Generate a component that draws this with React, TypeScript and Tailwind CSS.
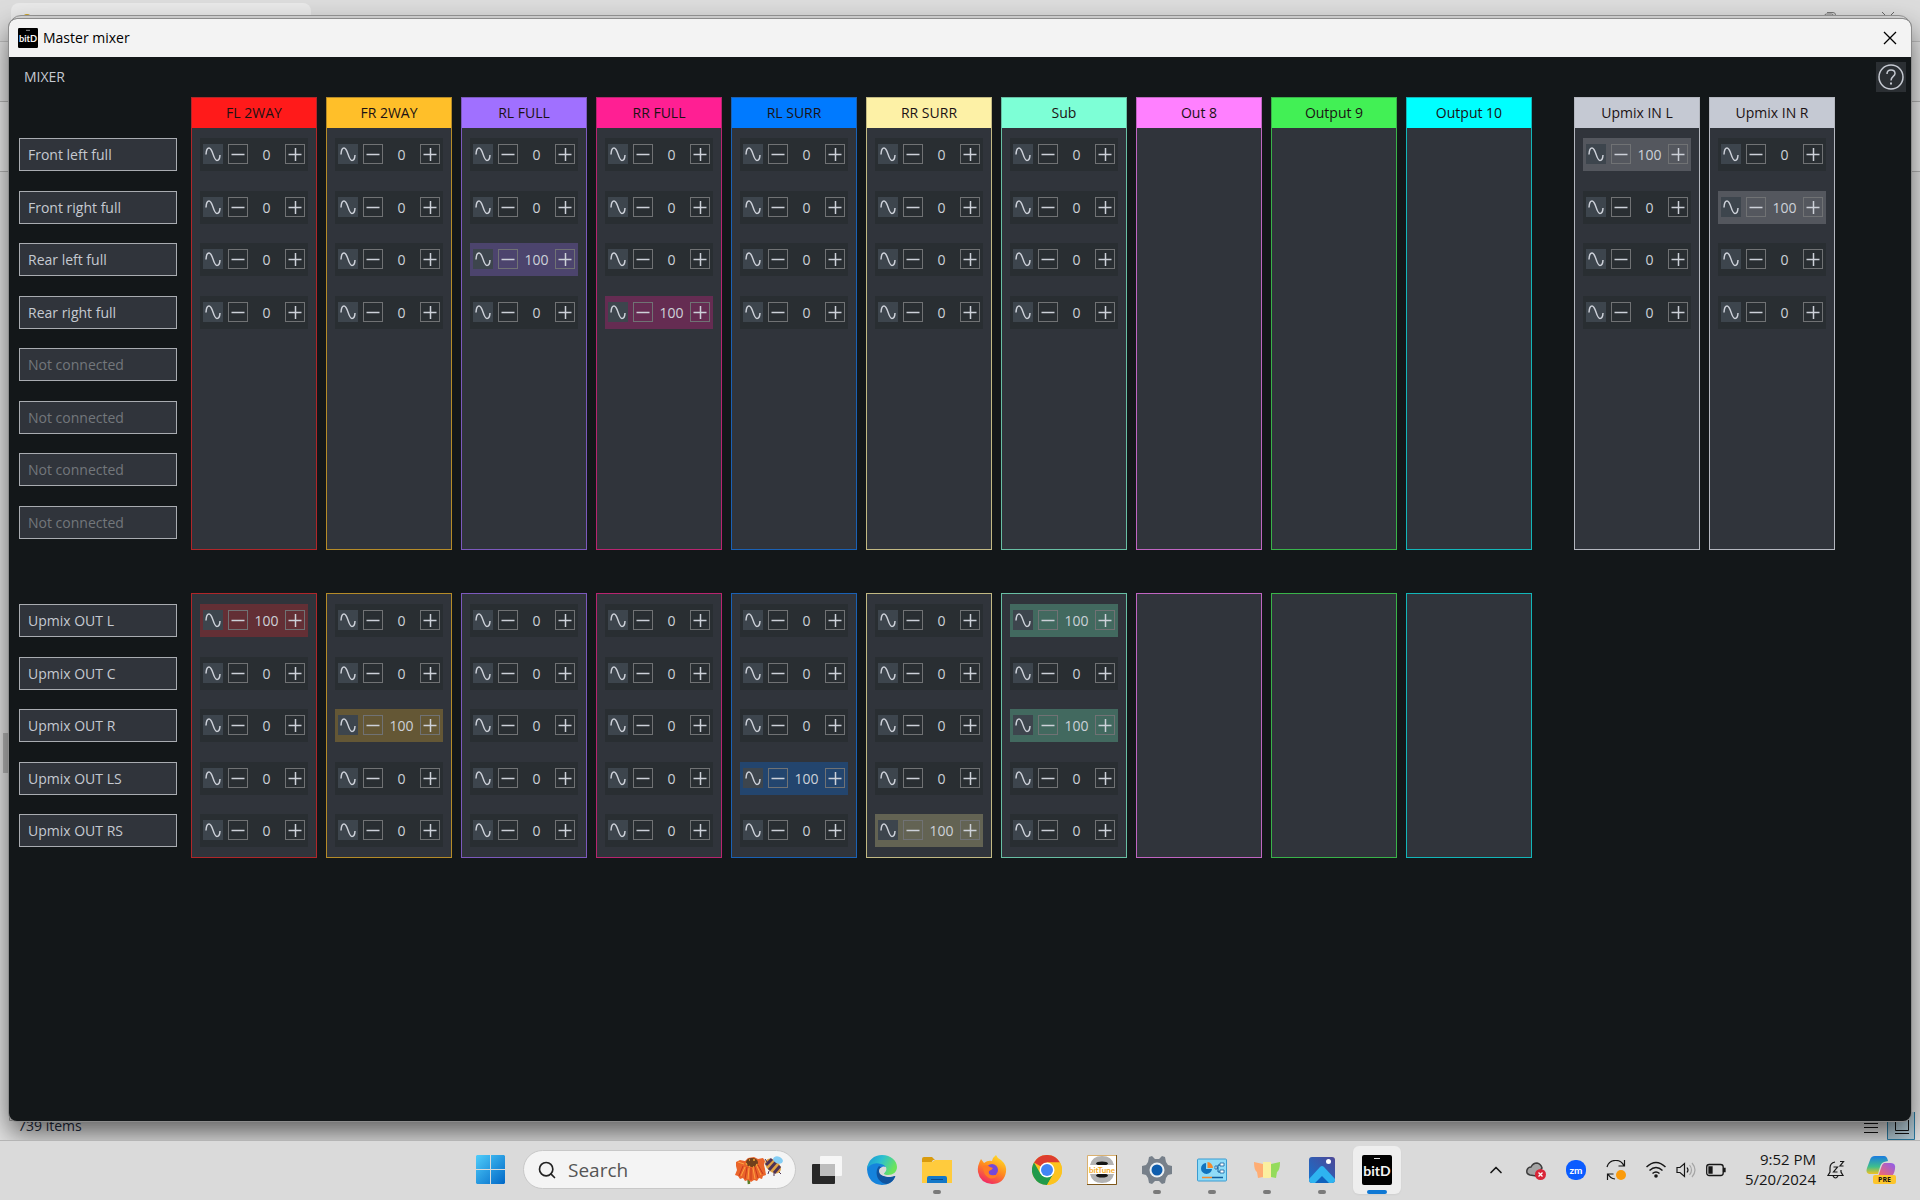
import React from 'react';
import { Search, ChevronUp } from 'lucide-react';

type Channel = {
  name: string;
  header: string;
  border: string;
  active: string;
  used: boolean;
};

const outputs: Channel[] = [
  { name: 'FL 2WAY', header: 'bg-[#ff1a1a]', border: 'border-[#b02629]', active: 'bg-[#632f35]', used: true },
  { name: 'FR 2WAY', header: 'bg-[#ffbf29]', border: 'border-[#b58b28]', active: 'bg-[#645735]', used: true },
  { name: 'RL FULL', header: 'bg-[#a070ff]', border: 'border-[#7c59bd]', active: 'bg-[#4c446d]', used: true },
  { name: 'RR FULL', header: 'bg-[#ff1f93]', border: 'border-[#b8246f]', active: 'bg-[#652c52]', used: true },
  { name: 'RL SURR', header: 'bg-[#007aff]', border: 'border-[#1a61b5]', active: 'bg-[#23456e]', used: true },
  { name: 'RR SURR', header: 'bg-[#fdf1a6]', border: 'border-[#c2b983]', active: 'bg-[#636353]', used: true },
  { name: 'Sub', header: 'bg-[#7dffd6]', border: 'border-[#68bfa4]', active: 'bg-[#42695f]', used: true },
  { name: 'Out 8', header: 'bg-[#ff80ff]', border: 'border-[#c065c2]', active: 'bg-[#654565]', used: false },
  { name: 'Output 9', header: 'bg-[#42f055]', border: 'border-[#39b349]', active: 'bg-[#2f6338]', used: false },
  { name: 'Output 10', header: 'bg-[#00ffff]', border: 'border-[#12b6b9]', active: 'bg-[#1f6467]', used: false },
];

const upmixInputs: Channel[] = [
  { name: 'Upmix IN L', header: 'bg-[#c5c9d3]', border: 'border-[#b4b7bf]', active: 'bg-[#54575e]', used: true },
  { name: 'Upmix IN R', header: 'bg-[#c5c9d3]', border: 'border-[#b4b7bf]', active: 'bg-[#54575e]', used: true },
];

const inputs = ['Front left full', 'Front right full', 'Rear left full', 'Rear right full', '', '', '', ''];
const upmixOutputs = ['Upmix OUT L', 'Upmix OUT C', 'Upmix OUT R', 'Upmix OUT LS', 'Upmix OUT RS'];

// "row > column" pairs that are routed at full level
const routed = new Set([
  'Rear left full > RL FULL',
  'Rear right full > RR FULL',
  'Front left full > Upmix IN L',
  'Front right full > Upmix IN R',
  'Upmix OUT L > FL 2WAY',
  'Upmix OUT R > FR 2WAY',
  'Upmix OUT LS > RL SURR',
  'Upmix OUT RS > RR SURR',
  'Upmix OUT L > Sub',
  'Upmix OUT R > Sub',
]);

const gridClass =
  'grid grid-cols-[163px_repeat(10,minmax(0,1fr))_24px_repeat(2,minmax(0,1fr))] gap-x-[9px] pl-2.5 pr-[76px]';

function Cell({ row, channel }: { row: string; channel: Channel }) {
  const id = `${row} > ${channel.name}`;
  const on = routed.has(id);
  return (
    <div className={`flex h-[33px] shrink-0 items-start px-[3px] pt-1.5 text-[#cdd1d9] ${on ? channel.active : 'bg-[#292e32]'}`}>
      <button aria-label={`Phase ${id}`} className="h-5 w-5 shrink-0 bg-[#3d454d]">
        <svg viewBox="0 0 20 20" className="h-5 w-5" fill="none" stroke="currentColor" strokeWidth="1.5">
          <path d="M3 10.500C3.200 6.500 4.200 4 6 4c4 0 4.200 12.500 8 12.500 1.800 0 2.800-2 3-5.500" />
        </svg>
      </button>
      <button aria-label={`Decrease ${id}`} className="ml-[5px] h-5 w-5 shrink-0 border border-[#707274]">
        <svg viewBox="0 0 18 18" className="h-[18px] w-[18px]" stroke="currentColor" strokeWidth="1.5">
          <path d="M2.500 9.500h13" />
        </svg>
      </button>
      <input
        aria-label={`Level ${id}`}
        defaultValue={on ? '100' : '0'}
        className="h-5 min-w-0 flex-1 bg-transparent pt-0.5 text-center text-sm leading-5 outline-none"
      />
      <button aria-label={`Increase ${id}`} className="h-5 w-5 shrink-0 border border-[#707274]">
        <svg viewBox="0 0 18 18" className="h-[18px] w-[18px]" stroke="currentColor" strokeWidth="1.5">
          <path d="M2.500 9.500h13M9.500 3v13" />
        </svg>
      </button>
    </div>
  );
}

function Column({ channel, rows, header }: { channel: Channel; rows: string[]; header: boolean }) {
  return (
    <div className={`flex flex-col border bg-[#30343b] ${channel.border}`}>
      {header && (
        <div className={`flex h-[30px] items-center justify-center text-sm text-[#1b1214] ${channel.header}`}>{channel.name}</div>
      )}
      <div className={`flex flex-col justify-between px-2 py-2.5 ${header ? 'h-[421px]' : 'h-[263px]'}`}>
        {rows.map((row, i) =>
          row && channel.used ? <Cell key={i} row={row} channel={channel} /> : <div key={i} className="h-[33px]" />
        )}
      </div>
    </div>
  );
}

function RowNames({ rows, className }: { rows: string[]; className: string }) {
  return (
    <div className={`mr-[5px] flex flex-col justify-between ${className}`}>
      {rows.map((row, i) => (
        <div
          key={i}
          className={`flex h-[33px] items-center border border-[#a9acb1] bg-[#30343b] px-2 pt-px text-sm ${row ? 'text-[#c5c9d1]' : 'text-[#73777b]'}`}
        >
          {row || 'Not connected'}
        </div>
      ))}
    </div>
  );
}

function BitLogo({ className }: { className: string }) {
  return (
    <svg viewBox="0 0 30 30" className={className}>
      <rect width="30" height="30" rx="2" fill="#000" />
      <path d="M12 3.500h6" stroke="#ddd" strokeWidth="1" />
      <text x="15" y="20.500" textAnchor="middle" fontFamily="Lato, sans-serif" fontWeight="700" fontSize="14" fill="#f4f4f4">
        bitD
      </text>
    </svg>
  );
}

function MixerWindow() {
  return (
    <main className="relative flex flex-1 flex-col overflow-hidden rounded-lg bg-[#131719] shadow-[0_0_0_1px_#8c8c8c,0_12px_28px_rgba(0,0,0,0.6)]">
      <header className="flex h-[38px] items-center bg-[#f3f3f3] pl-[9px] pr-[14px] text-black">
        <BitLogo className="h-5 w-5" />
        <h1 className="ml-[5px] text-sm">Master mixer</h1>
        <button aria-label="Close" className="ml-auto">
          <svg viewBox="0 0 14 14" className="h-3.5 w-3.5" stroke="currentColor" strokeWidth="1.3">
            <path d="M1 1l12 12M13 1L1 13" />
          </svg>
        </button>
      </header>

      <div className="flex h-10 items-center justify-between pl-[15px] pr-[5px] text-[#c5c9d1]">
        <h2 className="text-sm">MIXER</h2>
        <button aria-label="Help" className="h-[30px] w-[30px] bg-[#2b2f33]">
          <svg viewBox="0 0 30 30" fill="none" stroke="currentColor" strokeWidth="1.5">
            <circle cx="15" cy="15" r="12" />
            <path d="M11 12c0-5.500 8-5 8-.5 0 3-4 3-4 7" />
            <path d="M15 20.500v2" strokeWidth="2" />
          </svg>
        </button>
      </div>

      <section className={gridClass}>
        <RowNames rows={inputs} className="mt-[41px] h-[401px]" />
        {outputs.map(c => <Column key={c.name} channel={c} rows={inputs} header />)}
        <div />
        {upmixInputs.map(c => <Column key={c.name} channel={c} rows={inputs} header />)}
      </section>

      <section className={`mt-[43px] ${gridClass}`}>
        <RowNames rows={upmixOutputs} className="mt-[11px] h-[243px]" />
        {outputs.map(c => <Column key={c.name} channel={c} rows={upmixOutputs} header={false} />)}
      </section>
    </main>
  );
}

// File explorer that stays open behind the mixer
function Backdrop() {
  return (
    <div className="absolute inset-0 overflow-hidden bg-[#e4e4e4]">
      <div className="h-[41px] bg-[#dcdcdc] pt-[3px]">
        <div className="ml-[11px] h-full w-[300px] rounded-t-lg bg-[#e9e9e9] pl-3 pt-[11px]">
          <div className="h-2 w-2 rounded-full bg-[#c9a227]" />
        </div>
      </div>
      <div className="h-[60px] border-t border-[#c0c0c0]" />
      <div className="h-[71px] border-y border-[#b4b4b4] bg-[#ebebeb]" />
      <svg viewBox="0 0 12 12" className="absolute right-[84px] top-3 h-3 w-3" fill="none" stroke="#777">
        <path d="M.5 11V4q0-2 2-2h5q2 0 2 2M3 .5h6q2.500 0 2.500 2.500v6" />
      </svg>
      <svg viewBox="0 0 12 12" className="absolute right-[26px] top-3 h-3 w-3" stroke="#666">
        <path d="M0 0l12 12M12 0L0 12" />
      </svg>
      <div className="absolute left-[3px] top-[733px] h-10 w-2.5 bg-[#b5b5b5]" />
      <div className="absolute inset-x-[9px] bottom-[19px] top-[15px] rounded-t-xl border border-[#9a9a9a] bg-[#dedede]" />
      <div className="absolute inset-x-0 bottom-0 flex h-7 items-end justify-end gap-1.5 pr-[5px]">
        <p className="mr-auto pb-1 pl-[18px] text-sm leading-5 text-[#1f2a3d]">739 items</p>
        <svg viewBox="0 0 20 28" className="h-7 w-5" stroke="#111">
          <path d="M3 11.500h14M3 15.500h14M3 20.500h14" />
        </svg>
        <svg viewBox="0 0 28 28" className="h-7 w-7" fill="none" stroke="#111">
          <path d="M.5 0v27.500h27V0" fill="#b4cbd6" stroke="#2a7da5" />
          <path d="M8.500 4v14.500h13V4M8 21.500h14" />
        </svg>
      </div>
    </div>
  );
}

function TaskButton({ name, running, children }: { name: string; running?: boolean; children: React.ReactNode }) {
  return (
    <button aria-label={name} className="relative flex h-12 w-12 items-center justify-center">
      {children}
      {running && <span className="absolute bottom-0 h-1 w-2 rounded-full bg-[#7a7a7a]" />}
    </button>
  );
}

function Taskbar() {
  return (
    <footer className="grid h-[60px] grid-cols-[minmax(0,466fr)_auto_minmax(0,519fr)] items-center border-t border-[#b4b4b4] bg-[#dadada] pb-0.5">
      <div />
      <div className="flex items-center gap-[7px]">
        <TaskButton name="Start">
          <svg viewBox="0 0 29 29" className="h-[29px] w-[29px]">
            <defs>
              <linearGradient id="win" x1="0" y1="0" x2="1" y2="1">
                <stop offset="0" stopColor="#4fcdfa" />
                <stop offset="1" stopColor="#0067c7" />
              </linearGradient>
            </defs>
            <path d="M1 0h13v14H0V1zM15 0h13l1 1v13H15zM0 15h14v14H1l-1-1zM15 15h14v13l-1 1H15z" fill="url(#win)" />
          </svg>
        </TaskButton>
        <label className="ml-0.5 flex h-[39px] w-[273px] items-center rounded-full border border-[#c8c8c8] bg-[#f4f4f4] pl-[13px] pr-3">
          <Search size={20} strokeWidth={2} className="shrink-0 text-[#222]" />
          <input placeholder="Search" aria-label="Search" className="ml-[11px] min-w-0 flex-1 bg-transparent text-[19px] leading-6 placeholder-[#555] outline-none" />
          <svg viewBox="0 0 48 30" className="h-[30px] w-12 shrink-0">
            <path d="M13 20l1 9" stroke="#5b7d24" strokeWidth="2.500" />
            <path d="M1 7l4-2 5 1 3-3 6-1 4 2 5-1 2 3-1 4 1 4 1 6-3 1-1 3-3-1-2 3-3-1-3 2-3-2-3 1-2-3-3 1-2-3-3-1 2-5-1-4z" fill="#ea642a" />
            <path d="M8 11L4 21M12 12l-2 12M16 13v12M20 12l3 11M23 10l5 9" stroke="#c93a1c" strokeWidth="1" />
            <path d="M3 7l6 2M10 12l-4 9M14 13l-1 11M18 13l2 11M22 11l4 9" stroke="#ffa340" strokeWidth="1" />
            <ellipse cx="17" cy="7.500" rx="6" ry="4.500" fill="#70401c" />
            <path d="M11 8l1 2M14 11l1 1M18 12h1M22 9l-1 2M14 5h1M18 5h2" stroke="#f0a531" strokeWidth="1.300" />
            <ellipse cx="38" cy="11" rx="9" ry="6" transform="rotate(40 38 11)" fill="#e0a345" />
            <path d="M31 10l6-6M34 15l7-8M39 18l6-7" stroke="#4c3257" strokeWidth="3" />
            <ellipse cx="43" cy="5" rx="5" ry="3.500" transform="rotate(20 43 5)" fill="#84cdf4" />
            <path d="M30 4l2 3M34 16l-1 3M39 18v3M44 17l2 2" stroke="#4c3257" />
          </svg>
        </label>
        <TaskButton name="Task view">
          <svg viewBox="0 0 30 30" className="h-[30px] w-[30px]">
            <rect x="0" y="9" width="23" height="20" rx="1" fill="#282828" />
            <rect x="8" y="1" width="22" height="20" rx="1" fill="#f6f6f6" />
            <rect x="8" y="9" width="15" height="12" fill="#bdbdbd" />
          </svg>
        </TaskButton>
        <TaskButton name="Edge">
          <svg viewBox="0 0 30 30" className="h-[30px] w-[30px]">
            <defs>
              <linearGradient id="edge" x1="0" y1="0" x2="1" y2=".4">
                <stop offset="0" stopColor="#1793d6" />
                <stop offset=".5" stopColor="#2cc0cf" />
                <stop offset="1" stopColor="#6be45b" />
              </linearGradient>
            </defs>
            <path d="M0 14Q1 6 9 6q8 0 10 6-5-2-6 4 1 8 10 7l5-1q-4 8-13 8Q1 29 0 14z" fill="#1583dc" />
            <path d="M0 14C1 5 7 0 15 0c9 0 15 6 15 12 0 5-4 8-9 8-4 0-5-1-3-3 3-3 1-7-4-8C8 7 3 9 0 14z" fill="url(#edge)" />
            <path d="M12 11c-5 6-2 17 8 18 4-1 7-4 8-7 1-1 0-1-1-1-4 2-13 1-14-4 0-2 1-3 2-4z" fill="#10549f" />
            <path d="M12 16c0-3 3-5 6-3 2 2 1 3 0 4-2 2-1 3 1 4-4 0-7-2-7-5z" fill="#dadada" />
          </svg>
        </TaskButton>
        <TaskButton name="File Explorer" running>
          <svg viewBox="0 0 30 30" className="h-[30px] w-[30px]">
            <path d="M0 4q0-2 2-2h8l3 3h-2l-2 3H0z" fill="#d99b0d" />
            <path d="M0 7h10l3-2h17v23H0z" fill="#ffcb3d" />
            <path d="M5 28v-5q0-2 2-2h16q2 0 2 2v5z" fill="#1478c8" />
            <path d="M9 24.500h12" stroke="#0a4a8b" />
          </svg>
        </TaskButton>
        <TaskButton name="Firefox">
          <svg viewBox="0 0 30 30" className="h-[30px] w-[30px]">
            <defs>
              <linearGradient id="fox" x1=".8" y1="0" x2=".3" y2="1">
                <stop offset="0" stopColor="#ffe226" />
                <stop offset=".5" stopColor="#ff8a1f" />
                <stop offset="1" stopColor="#f02468" />
              </linearGradient>
            </defs>
            <path d="M4 4l3 4q4-3 8-2 1-4 4-6 1 3 5 5 6 5 5 12-2 12-14 12Q3 28 1 17q-1-6 3-13z" fill="url(#fox)" />
            <circle cx="15" cy="15" r="6" fill="#7548d8" />
            <path d="M6 11q4-2 7 1l3 1q-1 2-4 3-1 3 2 4 4 1 7-1-3 6-9 4-6-3-6-12z" fill="#ff7b25" />
          </svg>
        </TaskButton>
        <TaskButton name="Chrome">
          <svg viewBox="0 0 30 30" className="h-[30px] w-[30px]">
            <circle cx="15" cy="15" r="15" fill="#fcc31e" />
            <path d="M15 15L2 7.500A15 15 0 0 1 28 7.500H15z" fill="#dd3c2f" />
            <path d="M2 7.500A15 15 0 0 0 15 30l6.500-11.300L15 15 8.500 18.700z" fill="#219a4b" />
            <path d="M15 7.500h13A15 15 0 0 1 15 30l6.500-11.300z" fill="#fcc31e" />
            <circle cx="15" cy="15" r="7.500" fill="#fff" />
            <circle cx="15" cy="15" r="6" fill="#4285f4" />
          </svg>
        </TaskButton>
        <TaskButton name="bitTune">
          <svg viewBox="0 0 30 30" className="h-[30px] w-[30px]">
            <path d="M.5 .5h29v29H.5z" fill="#fff" stroke="#d9b070" />
            <path d="M29.500 0v29.500H0" fill="none" stroke="#7d571b" />
            <path d="M3 10Q5 1 15 1t12 9zM3 19q2 9 12 9t12-9z" fill="#b3b3b3" />
            <ellipse cx="15" cy="8.500" rx="6" ry="2" fill="#151515" />
            <ellipse cx="15" cy="20.500" rx="6" ry="2" fill="#151515" />
            <rect x="1" y="10" width="28" height="9" fill="#fff" />
            <text x="15" y="17.500" textAnchor="middle" fontSize="8" fontWeight="700" fontFamily="Lato, sans-serif" fill="#f4ac2a">bitTune</text>
          </svg>
        </TaskButton>
        <TaskButton name="Settings" running>
          <svg viewBox="0 0 30 30" className="h-[30px] w-[30px]">
            <path d="M7 2l3-1 3 3h4l3-3 3 1 1 5 2 3 4 1v8l-4 1-2 3-1 5-3 1-3-3h-4l-3 3-3-1-1-5-2-3-4-1v-8l4-1 2-3z" fill="#77808a" />
            <circle cx="15" cy="15" r="7.500" fill="#edf1f4" />
            <circle cx="15" cy="15" r="5.500" fill="#0e5dad" />
          </svg>
        </TaskButton>
        <TaskButton name="Control Panel" running>
          <svg viewBox="0 0 30 30" className="h-[30px] w-[30px]">
            <rect x=".5" y="4" width="29" height="22" rx="1" fill="#8fdcf8" stroke="#3a9bd0" />
            <path d="M9 8a5.500 5.500 0 1 0 6 6H9z" fill="#1173bd" />
            <path d="M10.500 7a6 6 0 0 1 5.500 6h-5.500z" fill="#f58b2c" />
            <path d="M18 13h3v-3h3M21 13v4h3" fill="none" stroke="#135e9c" />
            <path d="M23 8h4v3h-4zM23 15h4v3h-4zM18 11h2v3h-2z" fill="#fff" stroke="#135e9c" strokeWidth=".8" />
            <path d="M5 22.500h10" stroke="#f58b2c" strokeWidth="1.500" />
            <path d="M15 22.500h11" stroke="#135e9c" strokeWidth="1.500" />
          </svg>
        </TaskButton>
        <TaskButton name="Panels" running>
          <svg viewBox="0 0 30 30" className="h-[30px] w-[30px]">
            <path d="M2 7l9 2v13l-5 1-1-6q-3-2-3-10z" fill="#ffad73" />
            <path d="M28 7l-9 2v13l5 1 1-6q3-2 3-10z" fill="#94db5b" />
            <path d="M11 7h8v16h-8z" fill="#fbefa0" />
          </svg>
        </TaskButton>
        <TaskButton name="Photos" running>
          <svg viewBox="0 0 30 30" className="h-[30px] w-[30px]">
            <defs>
              <linearGradient id="photo" x1="0" y1="1" x2="1" y2="0">
                <stop offset="0" stopColor="#1373cf" />
                <stop offset="1" stopColor="#4e4796" />
              </linearGradient>
            </defs>
            <rect x="2" y="2" width="26" height="26" rx="3" fill="url(#photo)" />
            <path d="M2 24L13 12q2-2 4 0l11 12v2q-1 2-3 2H5q-3 0-3-4z" fill="#2eb4f0" />
            <path d="M8 28l7-7 7 7z" fill="#1062bd" />
            <circle cx="21.500" cy="6.500" r="2.500" fill="#fff" />
          </svg>
        </TaskButton>
        <button aria-label="bitD" className="relative flex h-12 w-12 items-center justify-center rounded-md bg-[#eeeeee] shadow-xs">
          <BitLogo className="h-[30px] w-[30px]" />
          <span className="absolute bottom-0 h-1 w-5 rounded-full bg-[#0f78d4]" />
        </button>
      </div>

      <div className="flex items-center justify-end pr-6 text-[#161616]">
        <button aria-label="Show hidden icons" className="mr-5">
          <ChevronUp size={20} strokeWidth={2} />
        </button>
        <svg viewBox="0 0 20 20" className="mr-5 h-5 w-5">
          <path d="M4 15q-4-1-3-5 1-3 4-3 2-4 6-4 4 1 5 5l-6 8z" fill="#a5a5a5" stroke="#3d3d3d" strokeWidth="1.500" />
          <circle cx="14.500" cy="14.500" r="5.500" fill="#d92638" />
          <path d="M12.500 12.500l4 4M16.500 12.500l-4 4" stroke="#fff" strokeWidth="1.300" />
        </svg>
        <svg viewBox="0 0 20 20" className="mr-5 h-5 w-5">
          <rect width="20" height="20" rx="9" fill="#0b5cff" />
          <text x="10" y="13.500" textAnchor="middle" fontSize="10" fontWeight="700" fontFamily="Lato, sans-serif" fill="#fff">zm</text>
        </svg>
        <svg viewBox="0 0 20 20" className="mr-5 h-5 w-5" fill="none" stroke="#161616" strokeWidth="1.200">
          <path d="M1 7a9 9 0 0 1 17-1M18.500 0v6h-6M9 19a9 9 0 0 1-7-5M1.500 20v-6h6" />
          <circle cx="15" cy="15" r="5" fill="#fa9b0c" stroke="none" />
        </svg>
        <svg viewBox="0 0 20 20" className="mr-2.5 h-5 w-5" fill="none" stroke="#161616" strokeWidth="1.500">
          <path d="M.5 7q9.500-9 19 0M3.500 10.500q6.500-6 13 0M6.500 13.500q3.500-3 7 0" />
          <circle cx="10" cy="16" r="1.800" fill="#161616" stroke="none" />
        </svg>
        <svg viewBox="0 0 20 20" className="mr-2.5 h-5 w-5" fill="none" stroke="#161616" strokeWidth="1.200">
          <path d="M1 7.500h3l4.500-4v13l-4.500-4H1z" />
          <path d="M11 7.500q2 2.500 0 5" />
          <path d="M13.500 5q4 5 0 10M16 3q6 7 0 14" stroke="#a5a5a5" />
        </svg>
        <svg viewBox="0 0 20 20" className="mr-2.5 h-5 w-5" fill="none" stroke="#161616" strokeWidth="1.300">
          <rect x=".7" y="4.500" width="16.500" height="11" rx="2.500" />
          <path d="M3 7h3v6H3zM17.500 8.500h1.500v3h-1.500z" fill="#161616" />
        </svg>
        <div className="mr-2.5 w-20 pb-0.5 text-right text-[15px] leading-5">
          <p>9:52 PM</p>
          <p>5/20/2024</p>
        </div>
        <svg viewBox="0 0 20 20" className="h-5 w-5" fill="none" stroke="#161616" strokeWidth="1.200">
          <path d="M9 2Q4 3 4 8v4l-2 3.500h15L15 12v-2M7 16q2.500 4 5 0" />
          <path d="M7.500 7h4l-4 5h4M14 1.500h3.500L14 6h3.500" />
        </svg>
        <svg viewBox="0 0 30 30" className="ml-5 h-[30px] w-[30px]">
          <defs>
            <linearGradient id="copilotA" x1="0" y1="0" x2="0" y2="1">
              <stop offset="0" stopColor="#1a7be0" />
              <stop offset=".6" stopColor="#3fbf8c" />
              <stop offset="1" stopColor="#f3c220" />
            </linearGradient>
            <linearGradient id="copilotB" x1="1" y1="0" x2="0" y2="1">
              <stop offset="0" stopColor="#8a5cf0" />
              <stop offset="1" stopColor="#ff6a5f" />
            </linearGradient>
          </defs>
          <path d="M9 1h9q3 0 4 5l-4 1q-3 1-4 5l-2 7H5q-6 0-4-6l3-8q1-4 5-4z" fill="url(#copilotA)" />
          <path d="M18 8h7q5 0 4 6-1 6-4 8H12l3-9q1-4 3-5z" fill="url(#copilotB)" />
          <rect x="7" y="20" width="23" height="9" rx="2" fill="#fcc52c" />
          <text x="18.500" y="27" textAnchor="middle" fontSize="7" fontWeight="700" fontFamily="Open Sans, sans-serif" fill="#111">PRE</text>
        </svg>
      </div>
    </footer>
  );
}

export default function App() {
  return (
    <div className="flex min-h-screen flex-col overflow-hidden font-['Open_Sans','Noto_Sans',sans-serif]">
      <div className="relative flex flex-1 flex-col px-[9px] pb-[19px] pt-[19px]">
        <Backdrop />
        <MixerWindow />
      </div>
      <div className="relative">
        <Taskbar />
      </div>
    </div>
  );
}
